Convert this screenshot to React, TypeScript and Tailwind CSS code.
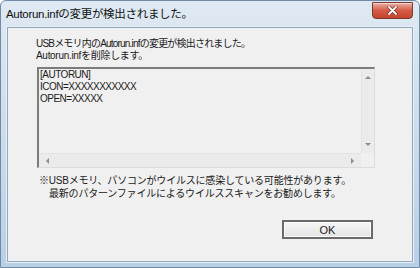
import React from 'react';

const font = { fontFamily: '"Liberation Sans", "Noto Sans CJK JP", sans-serif' };

const CloseButton: React.FC = () => (
  <div className="mt-[1px] mr-[6px] w-[41px] h-[17px] rounded-b-[4px] border border-[#7a3a30] bg-gradient-to-b from-[#eab0a4] via-[#d55a45] to-[#c4452d] flex items-center justify-center shadow-[inset_0_1px_0_rgba(255,255,255,0.5)]">
    <svg width="11" height="9" viewBox="0 0 11 9">
      <path d="M2 1 L9 8 M9 1 L2 8" stroke="#6a3028" strokeWidth="3.2" strokeLinecap="round" />
      <path d="M2 1 L9 8 M9 1 L2 8" stroke="#ffffff" strokeWidth="1.8" strokeLinecap="round" />
    </svg>
  </div>
);

const Arrow: React.FC<{ dir: 'up' | 'down' | 'left' | 'right' }> = ({ dir }) => {
  const d = {
    up: 'M1 4 L4 1 L7 4 Z',
    down: 'M1 1 L4 4 L7 1 Z',
    left: 'M4 1 L1 4 L4 7 Z',
    right: 'M1 1 L4 4 L1 7 Z',
  }[dir];
  const size = dir === 'up' || dir === 'down' ? { w: 8, h: 5 } : { w: 5, h: 8 };
  return (
    <svg width={size.w} height={size.h} viewBox={`0 0 ${size.w} ${size.h}`}>
      <path d={d} fill="#8a8a8a" />
    </svg>
  );
};

export default function App() {
  return (
    <div
      className="w-[420px] h-[268px] flex flex-col bg-gradient-to-b from-[#dfe9f2] via-[#cddceb] to-[#b9cfe3] border border-[#6f8aa6] rounded-t-[6px] overflow-hidden"
      style={font}
    >
      <div className="h-[26px] flex justify-between shrink-0">
        <div className="pl-[5px] pt-[6px] text-[11.5px] leading-[14px] tracking-[-0.3px] text-[#111]">Autorun.infの変更が検出されました。</div>
        <CloseButton />
      </div>

      <div className="mx-[6px] h-[235px] border border-[#8fa7bf] bg-[#f0f0f0] shadow-[0_0_0_1px_#e8f0f6] flex flex-col pl-[28px] text-[#1b1b1b]">
        <div className="pt-[10px] text-[10px] leading-[12px]">
          <div className="tracking-[-0.8px]">USBメモリ内のAutorun.infの変更が検出されました。</div>
          <div className="tracking-[-0.3px]">Autorun.infを削除します。</div>
        </div>

        <div className="mt-[5px] ml-[1px] w-[338px] h-[101px] flex flex-col border-t-2 border-l-2 border-[#7c7c7c] border-r border-b border-r-[#dcdcdc] border-b-[#dcdcdc] bg-[#f0f0f0]">
          <div className="flex flex-1 min-h-0">
            <div className="flex-1 pl-[1px] text-[10px] leading-[12px] tracking-[-0.5px]">
              <div>[AUTORUN]</div>
              <div>ICON=XXXXXXXXXXX</div>
              <div>OPEN=XXXXX</div>
            </div>
            <div className="w-[13px] bg-[#ebebeb] border-l border-[#e2e2e2] flex flex-col items-center justify-between py-[6px]">
              <Arrow dir="up" />
              <Arrow dir="down" />
            </div>
          </div>
          <div className="h-[14px] flex">
            <div className="flex-1 bg-[#ebebeb] border-t border-[#e2e2e2] flex items-center justify-between px-[6px]">
              <Arrow dir="left" />
              <Arrow dir="right" />
            </div>
            <div className="w-[13px] bg-[#f0f0f0]" />
          </div>
        </div>

        <div className="mt-[6px] ml-[3px] text-[10px] leading-[13px] tracking-[-0.2px]">
          <div>※USBメモリ、パソコンがウイルスに感染している可能性があります。</div>
          <div className="pl-[10px]">最新のパターンファイルによるウイルススキャンをお勧めします。</div>
        </div>

        <div className="mt-[20px] ml-[246px] w-[91px] h-[19px] border-2 border-[#6a6a6a] bg-gradient-to-b from-[#f6f6f6] to-[#e4e4e4] shadow-[inset_0_0_0_1px_#fbfbfb] flex items-center justify-center text-[11px] leading-[12px]">
          OK
        </div>
      </div>
    </div>
  );
}
